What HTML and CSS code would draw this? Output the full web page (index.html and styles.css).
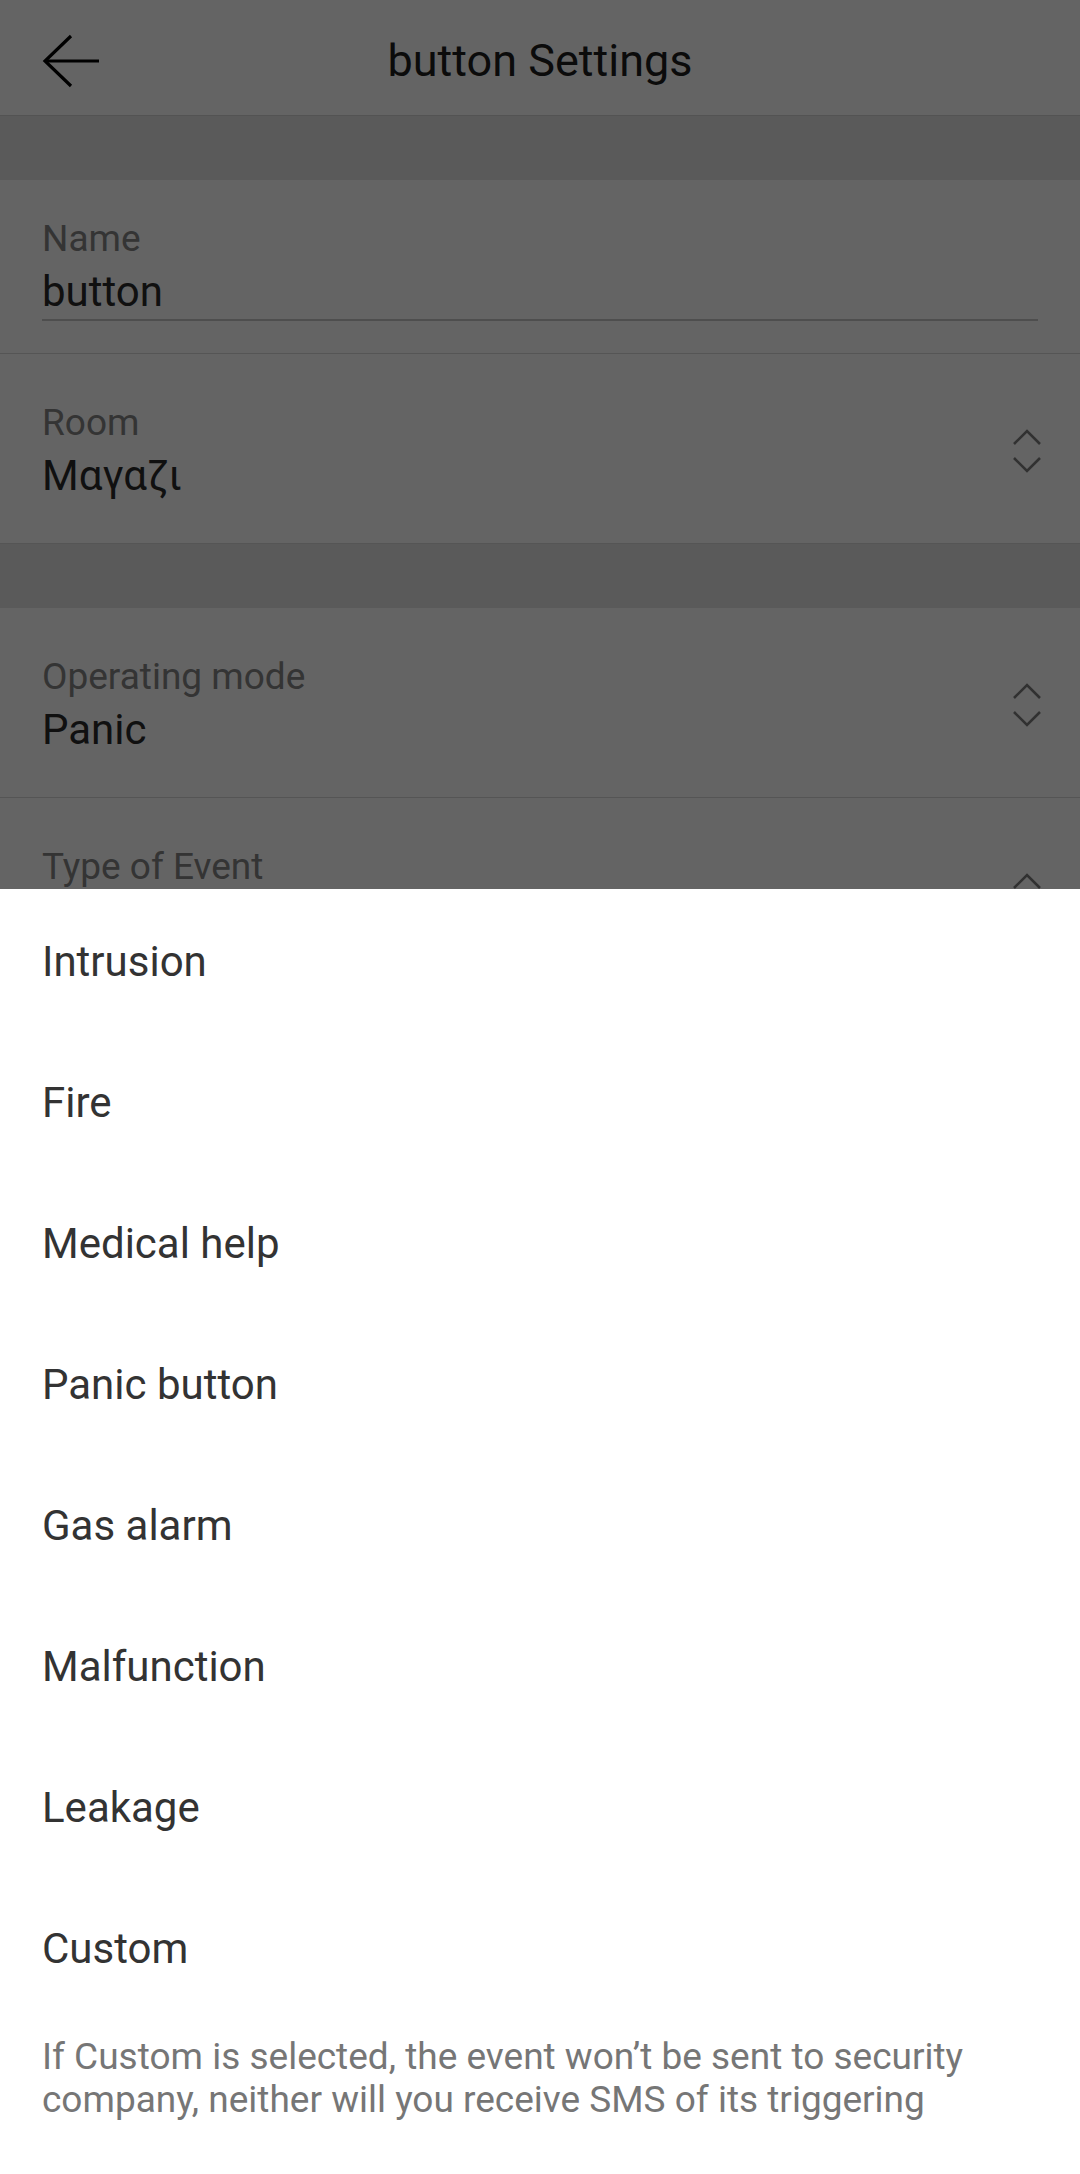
FILE: index.html
```html
<!DOCTYPE html>
<html lang="en">

<head>
    <meta charset="UTF-8">
    <meta name="viewport" content="width=device-width, initial-scale=1.0">
    <title>button Settings</title>
    <link rel="stylesheet" href="styles.css">
</head>

<body>
    <header class="topbar">
        <div class="back">
            <svg width="64" height="56" viewBox="0 0 64 56" fill="none" stroke="#000" stroke-width="3.2">
                <polyline points="31,3 5,28 31,53"></polyline>
                <line x1="5" y1="28" x2="59" y2="28"></line>
            </svg>
        </div>
        <h1 class="title">button Settings</h1>
        <div></div>
    </header>

    <div class="gap"></div>

    <div class="row row-input">
        <div class="label">Name</div>
        <div class="field">
            <div class="value">button</div>
        </div>
    </div>

    <div class="row row-select">
        <div class="select-text">
            <div class="label">Room</div>
            <div class="value">Μαγαζι</div>
        </div>
        <svg class="updown" width="30" height="44" viewBox="0 0 30 44" fill="none" stroke="#7d7d7d" stroke-width="2.6">
            <polyline points="2,15 15,2 28,15"></polyline>
            <polyline points="2,29 15,42 28,29"></polyline>
        </svg>
    </div>

    <div class="gap"></div>

    <div class="row row-select">
        <div class="select-text">
            <div class="label">Operating mode</div>
            <div class="value">Panic</div>
        </div>
        <svg class="updown" width="30" height="44" viewBox="0 0 30 44" fill="none" stroke="#7d7d7d" stroke-width="2.6">
            <polyline points="2,15 15,2 28,15"></polyline>
            <polyline points="2,29 15,42 28,29"></polyline>
        </svg>
    </div>

    <div class="row row-select">
        <div class="select-text">
            <div class="label">Type of Event</div>
            <div class="value value-empty"></div>
        </div>
        <svg class="updown" width="30" height="44" viewBox="0 0 30 44" fill="none" stroke="#7d7d7d" stroke-width="2.6">
            <polyline points="2,15 15,2 28,15"></polyline>
            <polyline points="2,29 15,42 28,29"></polyline>
        </svg>
    </div>

    <div class="scrim"></div>

    <div class="sheet">
        <ul class="options">
            <li>Intrusion</li>
            <li>Fire</li>
            <li>Medical help</li>
            <li>Panic button</li>
            <li>Gas alarm</li>
            <li>Malfunction</li>
            <li>Leakage</li>
            <li>Custom</li>
        </ul>
        <p class="note">If Custom is selected, the event won’t be sent to security company, neither will you receive SMS of its triggering</p>
    </div>
</body>

</html>
```

FILE: styles.css
```css
body {
    font-family: 'Roboto', 'Noto Sans', sans-serif;
    background-color: #ffffff;
    margin: 0;
    color: #2b2b2b;
}

.topbar {
    display: grid;
    grid-template-columns: 1fr auto 1fr;
    align-items: center;
    height: 116px;
    box-sizing: border-box;
    padding-top: 6px;
    border-bottom: 1px solid #d4d4d4;
    background: white;
}

.back {
    padding-left: 40px;
    display: flex;
    align-items: center;
}

.title {
    margin: 0;
    font-size: 45px;
    font-weight: 400;
    color: #1c1c1c;
    line-height: 54px;
}

.gap {
    height: 64px;
    background-color: #e6e6e6;
}

.row {
    background: white;
    border-bottom: 1px solid #d8d8d8;
    padding: 0 42px;
}

.label {
    font-size: 37px;
    line-height: 44px;
    color: #858585;
}

.value {
    font-size: 42px;
    line-height: 50px;
    color: #2b2b2b;
}

.value-empty {
    height: 50px;
}

.row-input {
    padding-top: 37px;
    padding-bottom: 32px;
}

.row-input .label {
    margin-bottom: 6px;
}

.field {
    padding-bottom: 2px;
    border-bottom: 2px solid #c8c8c8;
}

.row-select {
    display: flex;
    align-items: center;
    justify-content: space-between;
    padding: 47px 38px 42px 42px;
}

.row-select .label {
    margin-bottom: 6px;
}

.scrim {
    position: fixed;
    top: 0;
    left: 0;
    right: 0;
    bottom: 0;
    background: rgba(0, 0, 0, 0.608);
}

.sheet {
    position: fixed;
    left: 0;
    right: 0;
    bottom: 0;
    background: white;
    padding: 2px 0 53px;
}

.options {
    list-style: none;
    margin: 0;
    padding: 0;
}

.options li {
    height: 141px;
    display: flex;
    align-items: center;
    padding: 0 42px;
    font-size: 42px;
    color: #333333;
}

.note {
    margin: 16px 0 0;
    padding: 0 42px;
    font-size: 37px;
    line-height: 43px;
    color: #767676;
}
```
